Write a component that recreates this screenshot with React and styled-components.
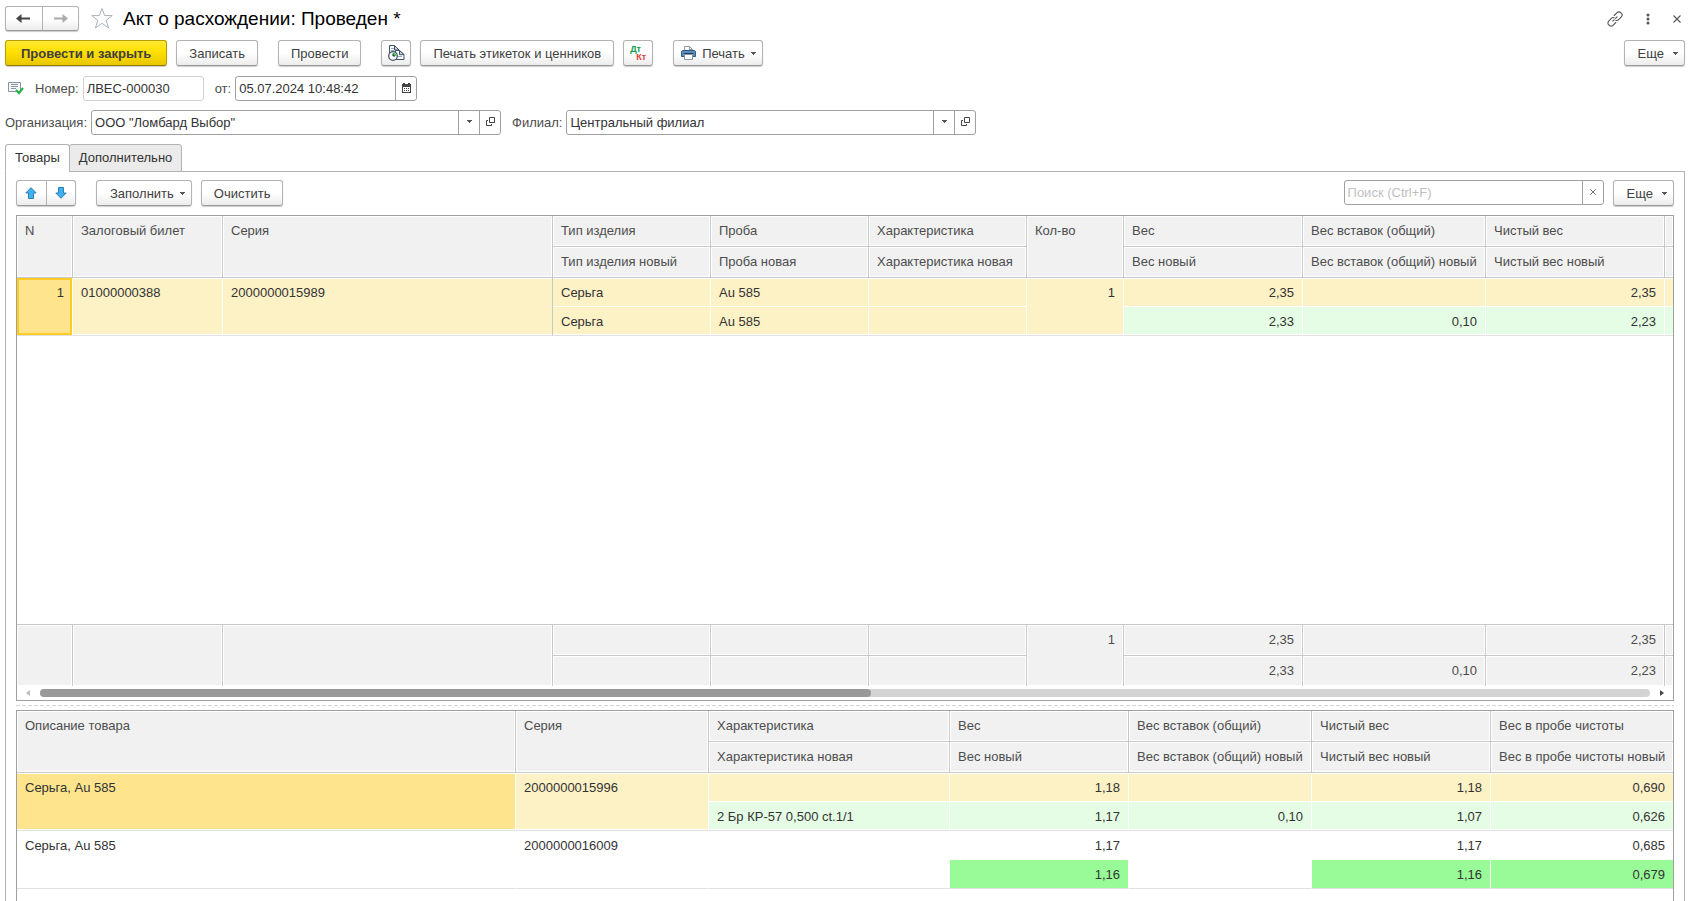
import React, { useState } from 'react';
import styled, { createGlobalStyle, css } from 'styled-components';

// data
const goodsColumns = [
  { key: 'n', title: 'N', width: 56, num: true },
  { key: 'ticket', title: 'Залоговый билет', width: 150 },
  { key: 'series', title: 'Серия', fixedEdge: true },
  { key: 'type', title: 'Тип изделия', titleNew: 'Тип изделия новый', width: 158 },
  { key: 'probe', title: 'Проба', titleNew: 'Проба новая', width: 158 },
  { key: 'feature', title: 'Характеристика', titleNew: 'Характеристика новая', width: 158 },
  { key: 'count', title: 'Кол-во', width: 97, num: true },
  { key: 'weight', title: 'Вес', titleNew: 'Вес новый', width: 179, num: true },
  { key: 'insert', title: 'Вес вставок (общий)', titleNew: 'Вес вставок (общий) новый', width: 183, num: true },
  { key: 'net', title: 'Чистый вес', titleNew: 'Чистый вес новый', width: 179, num: true },
  { key: 'more', title: '', titleNew: ' ', width: 8 },
];

const goodsRows = [
  {
    id: 1,
    selected: true,
    focus: 'n',
    was: { n: '1', ticket: '01000000388', series: '2000000015989', type: 'Серьга', probe: 'Au 585', count: '1', weight: '2,35', net: '2,35' },
    now: { type: 'Серьга', probe: 'Au 585', weight: '2,33', insert: '0,10', net: '2,23' },
    marks: { weight: 'mint', insert: 'mint', net: 'mint', more: 'mint' },
  },
];

const goodsTotals = {
  was: { count: '1', weight: '2,35', net: '2,35' },
  now: { weight: '2,33', insert: '0,10', net: '2,23' },
};

const detailColumns = [
  { key: 'descr', title: 'Описание товара' },
  { key: 'series', title: 'Серия', width: 193 },
  { key: 'feature', title: 'Характеристика', titleNew: 'Характеристика новая', width: 241 },
  { key: 'weight', title: 'Вес', titleNew: 'Вес новый', width: 179, num: true },
  { key: 'insert', title: 'Вес вставок (общий)', titleNew: 'Вес вставок (общий) новый', width: 183, num: true },
  { key: 'net', title: 'Чистый вес', titleNew: 'Чистый вес новый', width: 179, num: true },
  { key: 'pure', title: 'Вес в пробе чистоты', titleNew: 'Вес в пробе чистоты новый', width: 182, num: true },
];

const detailRows = [
  {
    id: 1,
    selected: true,
    current: 'descr',
    was: { descr: 'Серьга, Au 585', series: '2000000015996', weight: '1,18', net: '1,18', pure: '0,690' },
    now: { feature: '2 Бр КР-57 0,500 ct.1/1', weight: '1,17', insert: '0,10', net: '1,07', pure: '0,626' },
    marks: { feature: 'mint', weight: 'mint', insert: 'mint', net: 'mint', pure: 'mint' },
  },
  {
    id: 2,
    was: { descr: 'Серьга, Au 585', series: '2000000016009', weight: '1,17', net: '1,17', pure: '0,685' },
    now: { weight: '1,16', net: '1,16', pure: '0,679' },
    marks: { weight: 'green', net: 'green', pure: 'green' },
  },
];

const fills = {
  row: '#fdf1c6',
  current: '#fde48d',
  mint: '#e4fde4',
  green: '#98fb98',
};

// icons
const ArrowIcon = ({ color, flip }) => (
  <svg width="15" height="11" viewBox="0 0 15 11" fill={color}>
    <path d={flip ? 'M15 5.5 9.5 1v3.500H1v2h8.500V10z' : 'M0 5.5 5.500 1v3.500H14v2H5.500V10z'} />
  </svg>
);

const StarIcon = () => (
  <svg width="24" height="23" viewBox="0 0 24 23" fill="#fff" stroke="#a9b1b8">
    <path d="M12 1.500l2.600 7.100h7.600l-6 4.700 2.400 7.700-6.600-4.700L5.400 21l2.400-7.700-6-4.700h7.600z" />
  </svg>
);

const LinkIcon = () => (
  <svg width="16" height="16" viewBox="0 0 16 16" fill="none" stroke="#555" strokeWidth="1.1" strokeLinecap="round">
    <path d="M7.200 4.500l2.900-2.900c1-1 2.600-1 3.500 0l.8.8c.9.9.9 2.500-.1 3.500L11.400 8.800c-.7.7-1.700.8-2.600.4" />
    <path d="M8.800 11.500l-2.900 2.900c-1 1-2.600 1-3.500 0l-.8-.8c-.9-.9-.9-2.500.1-3.500l2.900-2.900c.7-.7 1.700-.8 2.600-.4" />
    <path d="M5.800 10.200l4.400-4.400" strokeDasharray="2 2" />
  </svg>
);

const DotsIcon = () => (
  <svg width="4" height="12" viewBox="0 0 4 12" fill="#555">
    <circle cx="2" cy="2" r="1.5" />
    <circle cx="2" cy="6" r="1.5" />
    <circle cx="2" cy="10" r="1.5" />
  </svg>
);

const CrossIcon = ({ size = 8 }) => (
  <svg width={size} height={size} viewBox="0 0 8 8" stroke="#555" strokeWidth="1.1">
    <path d="M.5.5l7 7M7.500.5l-7 7" />
  </svg>
);

const CaretIcon = () => (
  <svg width="5" height="3" viewBox="0 0 5 3" fill="#555" shapeRendering="crispEdges">
    <path d="M0 0h5v1H4v1H3v1H2V2H1V1H0z" />
  </svg>
);

const OpenIcon = () => (
  <svg width="9" height="9" viewBox="0 0 9 9" fill="none" stroke="#444">
    <path d="M3.500.5h5v5h-5zM2 3.500H.5v5h5V7" />
  </svg>
);

const CalendarIcon = () => (
  <svg width="9" height="10" viewBox="0 0 9 10" fill="#444" shapeRendering="crispEdges">
    <path d="M0 1h1V0h2v1h3V0h2v1h1v9H0zM1 4v5h7V4z" fillRule="evenodd" />
    <path d="M2 5h1v1H2zM4 5h1v1H4zM6 5h1v1H6zM2 7h1v1H2zM4 7h1v1H4zM6 7h1v1H6z" />
  </svg>
);

const PostedIcon = () => (
  <svg width="16" height="13" viewBox="0 0 16 13" fill="none">
    <path d="M.5.5h12v9H.5z" stroke="#8795a1" fill="#f6f8f9" />
    <path d="M3 2.500h7M3 4.500h7M3 6.500h5" stroke="#8795a1" />
    <path d="M8 8l3 3L15 6" stroke="#2bb34b" strokeWidth="2.200" />
  </svg>
);

const DocsIcon = () => (
  <svg width="17" height="16" viewBox="0 0 17 16" fill="none" stroke="#3f5468">
    <path d="M1.500 8V.5h5l4.500 4.500v8H6" fill="#fff" />
    <path d="M3 3.500h3M3 5.500h3" stroke="#9aa7b3" />
    <path d="M7.500 13.500V5.500h4l4.500 4v5H7.500" fill="#fff" />
    <path d="M6.500.5V5H11z" fill="#c9d2da" />
    <path d="M11.500 5.500v4.200H16z" fill="#c9d2da" />
    <path d="M10 11.500h4" stroke="#9aa7b3" />
    <circle cx="5" cy="11" r="4.300" fill="#fff" strokeWidth="1.300" />
    <path d="M5 11V7.500A3.500 3.500 0 0 1 8.500 11z" fill="#4fd35b" stroke="none" />
    <path d="M5 8.500V11h2" stroke="#222" />
  </svg>
);

const PrinterIcon = () => (
  <svg width="15" height="14" viewBox="0 0 15 14" fill="none">
    <path d="M3.500 5V.5h5l3 3V5" fill="#fff" stroke="#8b99a6" />
    <path d="M8.500.5v3h3" stroke="#8b99a6" />
    <path d="M1.500 4.500h12l1 1v5h-14v-5z" fill="#5c8fbd" stroke="#2f5d88" />
    <path d="M2.500 7.500h10" stroke="#1f4063" />
    <path d="M3.500 8.500h8v5h-8z" fill="#fff" stroke="#8b99a6" />
  </svg>
);

const MoveIcon = ({ down }) => (
  <svg width="12" height="12" viewBox="0 0 12 12" fill="#41b0f0" stroke="#2b7fb5">
    <path d={down ? 'M6 11.300L.8 6h2.700V.5h5V6h2.700z' : 'M6 .7L.8 6h2.700v5.500h5V6h2.700z'} />
  </svg>
);

const ScrollArrow = ({ right }) => (
  <svg width="4" height="6" viewBox="0 0 4 6" fill={right ? '#444' : '#bbb'}>
    <path d={right ? 'M0 0l4 3-4 3z' : 'M4 0L0 3l4 3z'} />
  </svg>
);

const Columns = ({ columns }) => (
  <colgroup>
    {columns.map((c) => (
      <col key={c.key} style={{ width: c.width }} />
    ))}
  </colgroup>
);

const GridHead = ({ columns }) => (
  <thead>
    <tr>
      {columns.map((c) => (
        <HeadCell key={c.key} rowSpan={c.titleNew ? 1 : 2}>{c.title}</HeadCell>
      ))}
    </tr>
    <tr>
      {columns.filter((c) => c.titleNew).map((c) => (
        <HeadCell key={c.key}>{c.titleNew}</HeadCell>
      ))}
    </tr>
  </thead>
);

const GridRow = ({ row, columns }) => {
  const base = row.selected ? 'row' : null;
  return (
    <tbody>
      <tr>
        {columns.map((c) => (
          <Cell
            key={c.key}
            rowSpan={c.titleNew ? 1 : 2}
            $first
            $num={c.num}
            $edge={c.fixedEdge}
            $last={!c.titleNew}
            $focus={row.focus === c.key}
            $fill={row.focus === c.key || row.current === c.key ? 'current' : base}
          >
            {row.was[c.key]}
          </Cell>
        ))}
      </tr>
      <tr>
        {columns.filter((c) => c.titleNew).map((c) => (
          <Cell key={c.key} $num={c.num} $last $fill={(row.marks && row.marks[c.key]) || base}>
            {row.now[c.key]}
          </Cell>
        ))}
      </tr>
    </tbody>
  );
};

const GridTotals = ({ totals, columns }) => (
  <Grid aria-label="Итоги">
    <Columns columns={columns} />
    <tbody>
      <tr>
        {columns.map((c) => (
          <TotalCell key={c.key} rowSpan={c.titleNew ? 1 : 2} $num={c.num} $line={c.titleNew}>
            {totals.was[c.key]}
          </TotalCell>
        ))}
      </tr>
      <tr>
        {columns.filter((c) => c.titleNew).map((c) => (
          <TotalCell key={c.key} $num={c.num}>{totals.now[c.key]}</TotalCell>
        ))}
      </tr>
    </tbody>
  </Grid>
);

const LookupField = ({ id, label, value, onChange }) => (
  <>
    <Label htmlFor={id}>{label}</Label>
    <Field $width={410}>
      <FieldInput id={id} value={value} onChange={(e) => onChange(e.target.value)} />
      <FieldButton aria-label="Выбрать"><CaretIcon /></FieldButton>
      <FieldButton aria-label="Открыть"><OpenIcon /></FieldButton>
    </Field>
  </>
);

const App = () => {
  const [tab, setTab] = useState('goods');
  const [number, setNumber] = useState('ЛВЕС-000030');
  const [date, setDate] = useState('05.07.2024 10:48:42');
  const [org, setOrg] = useState('ООО "Ломбард Выбор"');
  const [branch, setBranch] = useState('Центральный филиал');
  const [search, setSearch] = useState('');

  return (
    <Page>
      <GlobalStyle />

      <TitleBar>
        <ButtonPair $low>
          <PairButton aria-label="Назад"><ArrowIcon color="#444" /></PairButton>
          <PairButton aria-label="Вперед"><ArrowIcon color="#aaa" flip /></PairButton>
        </ButtonPair>
        <PlainButton aria-label="В избранное"><StarIcon /></PlainButton>
        <Title>Акт о расхождении: Проведен *</Title>
        <WindowTools>
          <PlainButton aria-label="Ссылка"><LinkIcon /></PlainButton>
          <PlainButton aria-label="Меню"><DotsIcon /></PlainButton>
          <PlainButton aria-label="Закрыть"><CrossIcon /></PlainButton>
        </WindowTools>
      </TitleBar>

      <CommandBar>
        <Group>
          <PrimaryButton>Провести и закрыть</PrimaryButton>
          <Button>Записать</Button>
        </Group>
        <Button>Провести</Button>
        <Group>
          <IconButton aria-label="Структура подчиненности"><DocsIcon /></IconButton>
          <Button>Печать этикеток и ценников</Button>
          <IconButton aria-label="Проводки">
            <Postings><span>Дт</span><span>Кт</span></Postings>
          </IconButton>
        </Group>
        <MenuButton $icon><PrinterIcon />Печать<CaretIcon /></MenuButton>
        <Spacer />
        <MoreButton>Еще<CaretIcon /></MoreButton>
      </CommandBar>

      <FieldRow $indent>
        <PostedIcon />
        <Label htmlFor="number">Номер:</Label>
        <Field $width={121} $light>
          <FieldInput id="number" value={number} onChange={(e) => setNumber(e.target.value)} />
        </Field>
        <Label htmlFor="date">от:</Label>
        <Field $width={182}>
          <FieldInput id="date" value={date} onChange={(e) => setDate(e.target.value)} />
          <FieldButton aria-label="Календарь"><CalendarIcon /></FieldButton>
        </Field>
      </FieldRow>

      <FieldRow>
        <LookupField id="org" label="Организация:" value={org} onChange={setOrg} />
        <LookupField id="branch" label="Филиал:" value={branch} onChange={setBranch} />
      </FieldRow>

      <Tabs role="tablist">
        <Tab role="tab" aria-selected={tab === 'goods'} $active={tab === 'goods'} onClick={() => setTab('goods')}>Товары</Tab>
        <Tab role="tab" aria-selected={tab === 'extra'} $active={tab === 'extra'} onClick={() => setTab('extra')}>Дополнительно</Tab>
      </Tabs>

      <Panel>
        {tab === 'goods' && (
          <>
            <TableBar>
              <ButtonPair>
                <PairButton aria-label="Вверх"><MoveIcon /></PairButton>
                <PairButton aria-label="Вниз"><MoveIcon down /></PairButton>
              </ButtonPair>
              <Group>
                <MenuButton>Заполнить<CaretIcon /></MenuButton>
                <Button>Очистить</Button>
              </Group>
              <Spacer />
              <Group>
                <Field $width={260}>
                  <FieldInput
                    aria-label="Поиск"
                    placeholder="Поиск (Ctrl+F)"
                    value={search}
                    onChange={(e) => setSearch(e.target.value)}
                  />
                  <FieldButton aria-label="Сбросить" onClick={() => setSearch('')}><CrossIcon size={6} /></FieldButton>
                </Field>
                <MoreButton>Еще<CaretIcon /></MoreButton>
              </Group>
            </TableBar>

            <GoodsPane>
              <Grid aria-label="Товары">
                <Columns columns={goodsColumns} />
                <GridHead columns={goodsColumns} />
                {goodsRows.map((row) => (
                  <GridRow key={row.id} row={row} columns={goodsColumns} />
                ))}
              </Grid>
              <TotalsArea>
                <GridTotals totals={goodsTotals} columns={goodsColumns} />
              </TotalsArea>
              <ScrollBar>
                <ScrollArrow />
                <Track><Thumb /></Track>
                <ScrollArrow right />
              </ScrollBar>
            </GoodsPane>

            <Splitter />

            <DetailPane>
              <Grid aria-label="Состав">
                <Columns columns={detailColumns} />
                <GridHead columns={detailColumns} />
                {detailRows.map((row) => (
                  <GridRow key={row.id} row={row} columns={detailColumns} />
                ))}
              </Grid>
            </DetailPane>
          </>
        )}
      </Panel>
    </Page>
  );
};

const GlobalStyle = createGlobalStyle`
  * {
    box-sizing: border-box;
  }
  body {
    margin: 0;
    background: #fff;
  }
  body, button, input {
    font-family: "Liberation Sans", Arial, sans-serif;
    font-size: 13px;
    color: #404040;
  }
  svg {
    display: block;
    flex-shrink: 0;
  }
`

const Page = styled.div`
  display: flex;
  flex-direction: column;
  height: 100vh;
  padding: 6px 18px 0 5px;
  overflow: hidden;
`

const Spacer = styled.div`
  flex: 1;
`

const Group = styled.div`
  display: flex;
  gap: 9px;
`

const TitleBar = styled.header`
  display: flex;
  align-items: center;
  height: 25px;
  margin-bottom: 9px;
`

const Title = styled.h1`
  flex: 1;
  margin: 0 0 0 9px;
  font-size: 19px;
  font-weight: normal;
  line-height: 24px;
  color: #000;
`

const PlainButton = styled.button`
  padding: 0;
  border: none;
  background: none;
  cursor: pointer;
`

const WindowTools = styled.div`
  display: flex;
  align-items: center;
  gap: 23px;
  margin-right: 4px;
`

const raised = css`
  border: 1px solid #b3b3b3;
  border-bottom-color: #999;
  border-radius: 3px;
  background: linear-gradient(#fff 50%, #ececec);
  box-shadow: 0 1px 1px #ccc;
`

const Button = styled.button`
  ${raised}
  display: flex;
  align-items: center;
  justify-content: center;
  height: 26px;
  padding: 0 12px;
  white-space: nowrap;
  cursor: pointer;
`

const PrimaryButton = styled(Button)`
  padding: 0 15px;
  border-color: #b59c00;
  border-bottom-color: #8f7b00;
  background: linear-gradient(#ffe936, #ffe000 45%, #e9c700);
  font-weight: bold;
`

const IconButton = styled(Button)`
  width: 30px;
  padding: 0;
`

const MenuButton = styled(Button)`
  gap: 6px;
  padding: 0 6px 0 ${props => props.$icon ? '7px' : '13px'};
`

const MoreButton = styled(MenuButton)`
  gap: 9px;
`

const ButtonPair = styled.div`
  ${raised}
  display: flex;
  height: ${props => props.$low ? '25px' : '26px'};
  width: ${props => props.$low ? '74px' : '60px'};
  margin-right: ${props => props.$low ? '11px' : '20px'};
`

const PairButton = styled.button`
  display: flex;
  flex: 1;
  align-items: center;
  justify-content: center;
  padding: 0;
  border: none;
  background: none;
  cursor: pointer;

  & + & {
    border-left: 1px solid #b3b3b3;
  }
`

const Postings = styled.span`
  display: flex;
  flex-direction: column;
  width: 16px;
  font-size: 9px;
  font-weight: bold;
  line-height: 8px;
  text-align: left;
  color: #0f9a4a;

  span + span {
    text-align: right;
    color: #e0403a;
  }
`

const CommandBar = styled.div`
  display: flex;
  gap: 20px;
  margin-bottom: 10px;

  > ${Spacer} {
    margin: 0 -20px;
  }
`

const FieldRow = styled.div`
  display: flex;
  align-items: center;
  margin-bottom: 9px;
  padding-left: ${props => props.$indent ? '3px' : '0'};

  > svg {
    margin-right: 11px;
  }
`

const Label = styled.label`
  margin-right: 4px;
  color: #4d4d4d;
`

const Field = styled.div`
  display: flex;
  width: ${props => props.$width}px;
  height: 25px;
  border: 1px solid ${props => props.$light ? '#d0d0d0' : '#a0a0a0'};
  border-radius: 3px;
  background: #fff;

  & + ${Label} {
    margin-left: 11px;
  }
`

const FieldInput = styled.input`
  flex: 1;
  min-width: 0;
  padding: 0 3px;
  border: none;
  outline: none;
  background: none;
  color: #333;

  &::placeholder {
    color: #c0c0c0;
  }
`

const FieldButton = styled.button`
  display: flex;
  align-items: center;
  justify-content: center;
  width: 21px;
  padding: 0 0 2px;
  border: none;
  border-left: 1px solid #a0a0a0;
  background: none;
  cursor: pointer;
`

const Tabs = styled.div`
  display: flex;
  height: 28px;
  position: relative;
  z-index: 1;
`

const Tab = styled.button`
  padding: 0 9px 2px;
  border: 1px solid #b3b3b3;
  border-bottom-color: ${props => props.$active ? '#fff' : '#b3b3b3'};
  border-radius: 3px 3px 0 0;
  background: ${props => props.$active ? '#fff' : '#ebebeb'};
  color: #333;
  cursor: pointer;

  & + & {
    margin-left: -1px;
  }
`

const Panel = styled.main`
  display: flex;
  flex: 1;
  flex-direction: column;
  min-height: 0;
  margin-top: -1px;
  padding: 8px 10px 0;
  border: 1px solid #b3b3b3;
  border-bottom: none;
`

const TableBar = styled.div`
  display: flex;
  align-items: center;
  margin-bottom: 9px;
`

const GoodsPane = styled.section`
  display: flex;
  flex: 1;
  flex-direction: column;
  min-height: 0;
  overflow: hidden;
  border: 1px solid #a0a0a0;
`

const DetailPane = styled.section`
  padding-bottom: 12px;
  border: 1px solid #a0a0a0;
  border-bottom: none;
`

const Grid = styled.table`
  width: 100%;
  table-layout: fixed;
  border-collapse: separate;
  border-spacing: 0;

  th:last-child, td:last-child {
    border-right: none;
  }
`

const HeadCell = styled.th`
  height: 31px;
  padding: 0 0 0 8px;
  border-right: 1px solid #c8c8c8;
  border-bottom: 1px solid #c8c8c8;
  background: #f1f1f1;
  box-shadow: inset 0 0 0 1px #fff;
  font-weight: normal;
  line-height: 30px;
  text-align: left;
  vertical-align: top;
  white-space: nowrap;
  overflow: hidden;
  color: #4d4d4d;
`

// white hairlines above the first line and below the last line of a record
const hairlines = ({ $first, $last, $focus, $fill }) => {
  if ($focus) return 'inset 0 0 0 2px #fc2';
  const lines = [];
  if ($first) lines.push('inset 0 1px #fff');
  if ($last && $fill !== 'green') lines.push('inset 0 -1px #fff');
  return lines.join(', ') || 'none';
}

const Cell = styled.td`
  height: 29px;
  padding: 2px 8px 0;
  border-right: 1px solid ${props => props.$edge ? '#c8c8c8' : '#fff'};
  border-bottom: 1px solid ${props => props.$last ? '#e0e0e0' : '#fff'};
  background: ${props => fills[props.$fill] || '#fff'};
  background-clip: padding-box;
  box-shadow: ${hairlines};
  line-height: 26px;
  text-align: ${props => props.$num ? 'right' : 'left'};
  vertical-align: top;
  white-space: nowrap;
  color: #333;

  &:last-child {
    padding-left: 0;
  }
`

const TotalsArea = styled.div`
  margin-top: auto;
  border-top: 1px solid #c8c8c8;
`

const TotalCell = styled.td`
  height: ${props => props.$line ? '31px' : '30px'};
  padding: 0 8px;
  border-right: 1px solid #c8c8c8;
  border-bottom: ${props => props.$line ? '1px solid #c8c8c8' : 'none'};
  background: #f1f1f1;
  box-shadow: inset 0 0 0 1px #fff;
  line-height: 30px;
  text-align: ${props => props.$num ? 'right' : 'left'};
  vertical-align: top;
  color: #4d4d4d;

  &:last-child {
    padding: 0;
  }
`

const ScrollBar = styled.div`
  display: flex;
  align-items: center;
  gap: 10px;
  height: 14px;
  padding: 0 9px;
`

const Track = styled.div`
  display: flex;
  flex: 1;
  height: 8px;
  border-radius: 4px;
  background: #d4d4d4;

  &::after {
    content: '';
    flex: 15;
  }
`

const Thumb = styled.div`
  flex: 16;
  border-radius: 4px;
  background: #999;
`

const Splitter = styled.div`
  flex-shrink: 0;
  height: 1px;
  margin: 4px 0;
  background: repeating-linear-gradient(90deg, #d4d4d4 0 4px, #fff 4px 6px);
`

export default App;
